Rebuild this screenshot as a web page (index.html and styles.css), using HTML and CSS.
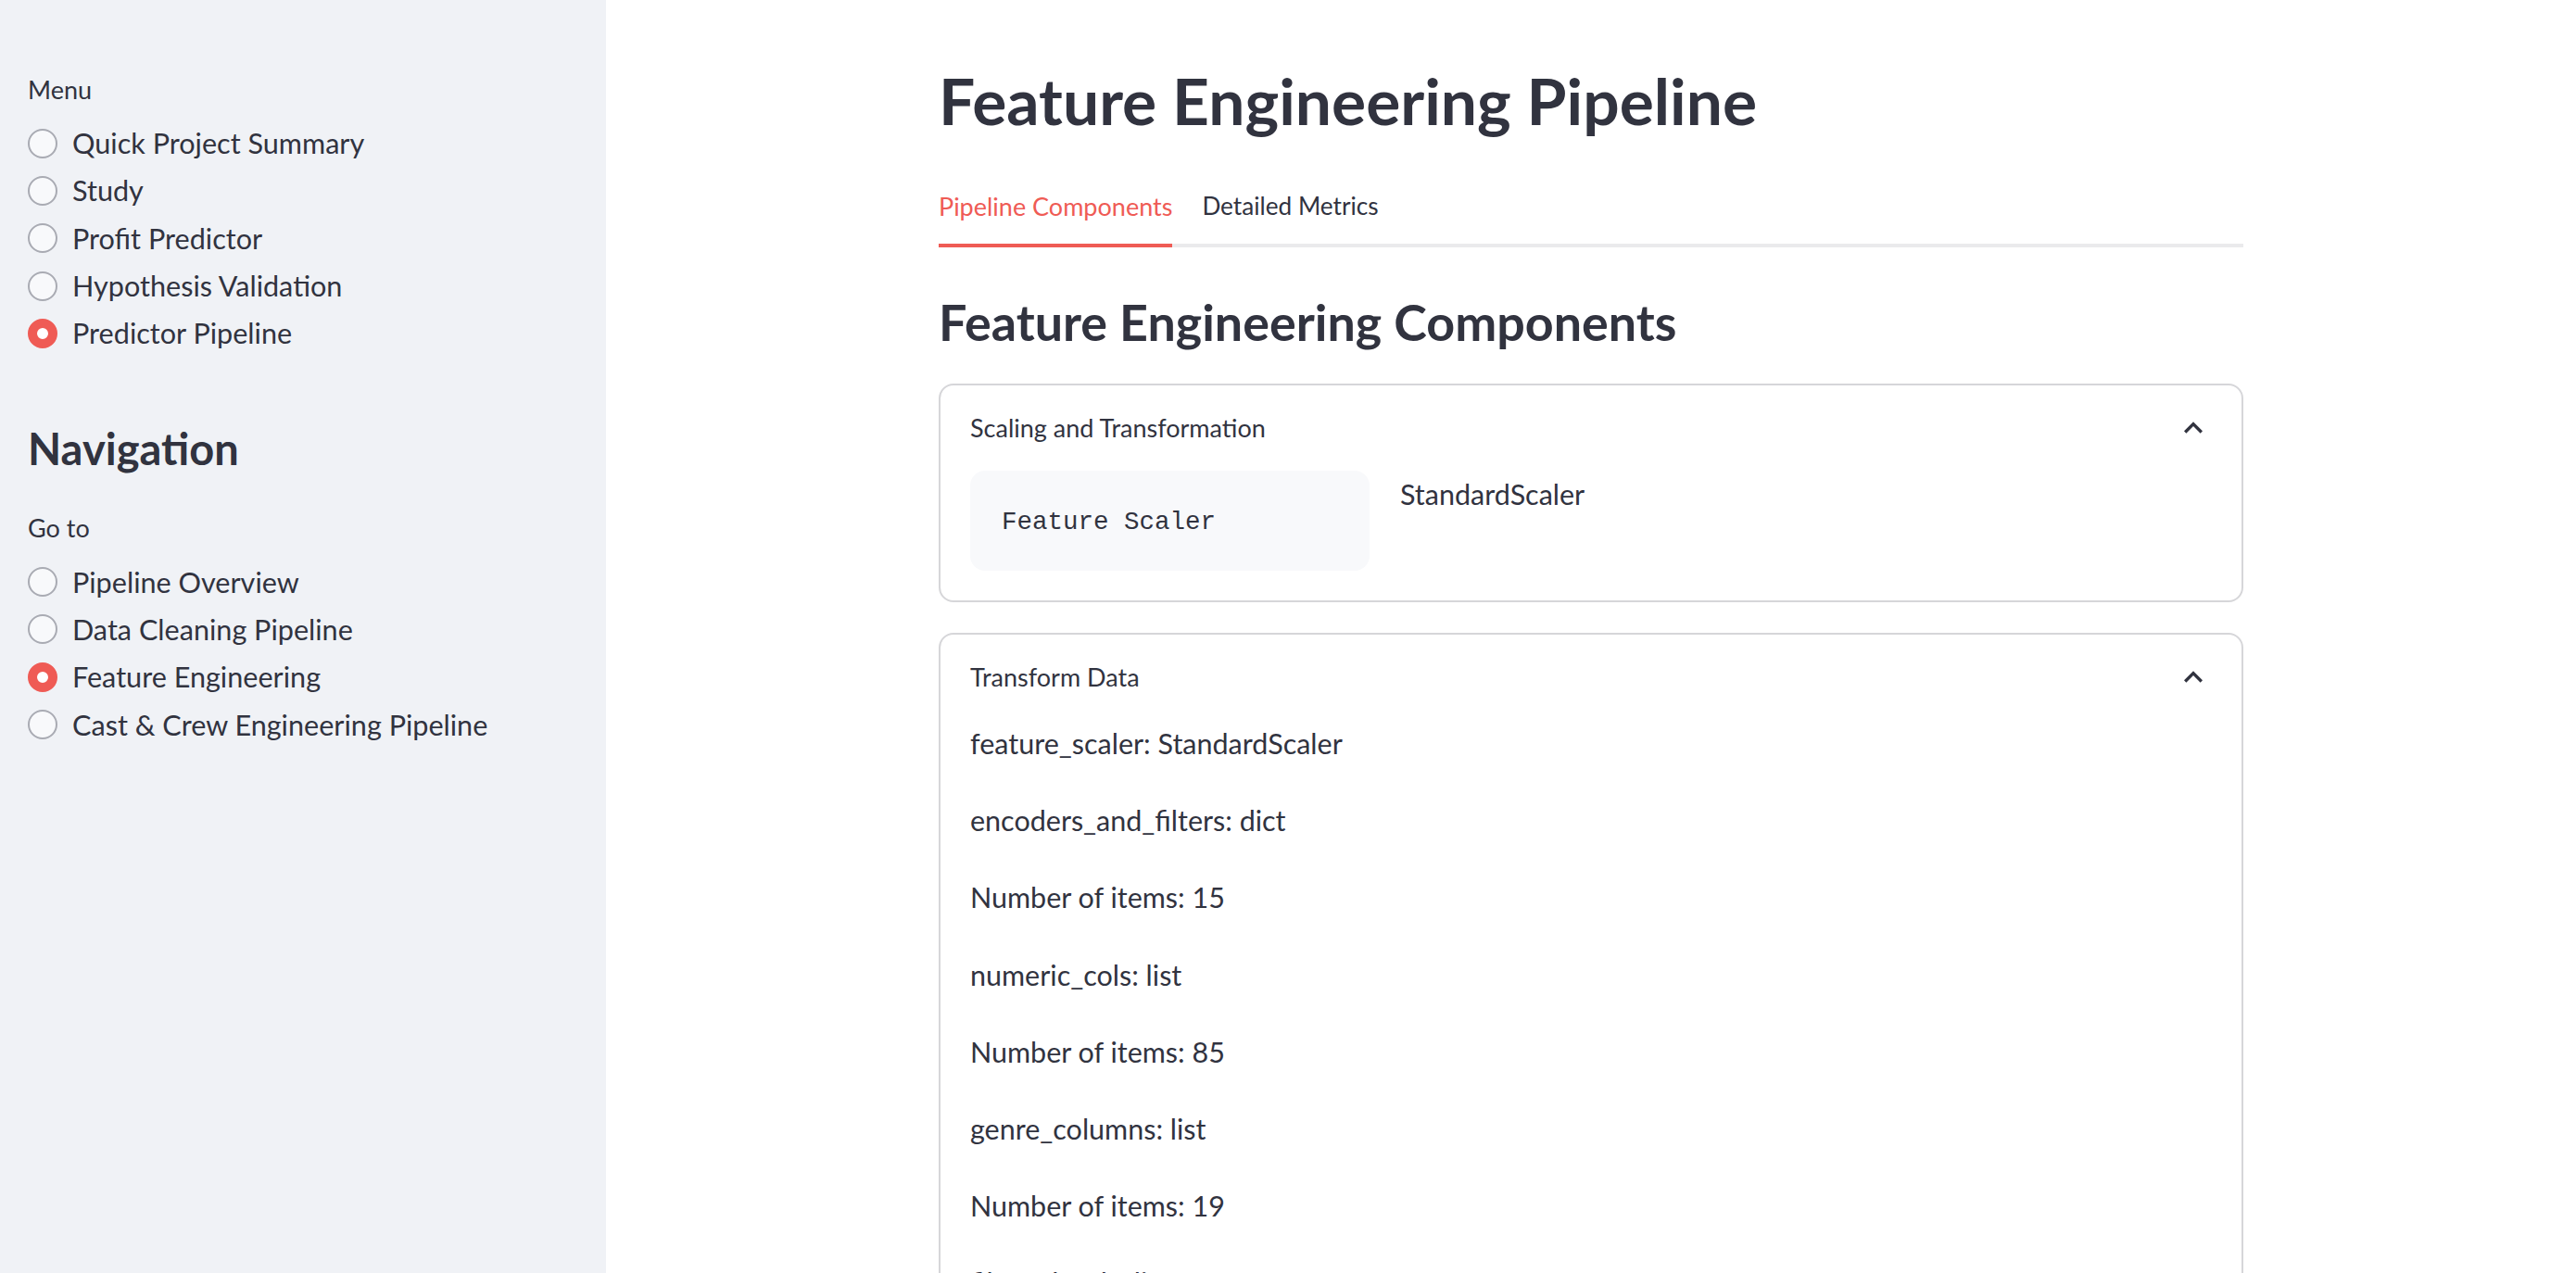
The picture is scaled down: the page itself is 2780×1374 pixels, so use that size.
FILE: index.html
```html
<!DOCTYPE html>
<html lang="en">
<head>
<meta charset="utf-8">
<title>Feature Engineering Pipeline</title>
<link rel="stylesheet" href="styles.css">
</head>
<body>
<div class="app">
  <aside class="sidebar">
    <div class="widget-label">Menu</div>
    <div class="radio-group">
      <div class="radio"><span class="dot"></span><span class="radio-text">Quick Project Summary</span></div>
      <div class="radio"><span class="dot"></span><span class="radio-text">Study</span></div>
      <div class="radio"><span class="dot"></span><span class="radio-text">Profit Predictor</span></div>
      <div class="radio"><span class="dot"></span><span class="radio-text">Hypothesis Validation</span></div>
      <div class="radio checked"><span class="dot"></span><span class="radio-text">Predictor Pipeline</span></div>
    </div>
    <h2 class="side-heading">Navigation</h2>
    <div class="widget-label">Go to</div>
    <div class="radio-group">
      <div class="radio"><span class="dot"></span><span class="radio-text">Pipeline Overview</span></div>
      <div class="radio"><span class="dot"></span><span class="radio-text">Data Cleaning Pipeline</span></div>
      <div class="radio checked"><span class="dot"></span><span class="radio-text">Feature Engineering</span></div>
      <div class="radio"><span class="dot"></span><span class="radio-text">Cast &amp; Crew Engineering Pipeline</span></div>
    </div>
  </aside>
  <main class="main">
    <div class="block">
      <h1 class="page-title">Feature Engineering Pipeline</h1>
      <div class="tabs">
        <div class="tab active">Pipeline Components</div>
        <div class="tab">Detailed Metrics</div>
      </div>
      <h3 class="section-title">Feature Engineering Components</h3>

      <div class="expander">
        <div class="exp-header">
          <span class="exp-title">Scaling and Transformation</span>
          <svg class="chevron" viewBox="0 0 24 24" width="40" height="40"><path d="M12 8l-6 6 1.41 1.41L12 10.83l4.59 4.58L18 14z" fill="#31333f"/></svg>
        </div>
        <div class="exp-body">
          <div class="cols">
            <div class="col"><pre class="code">Feature Scaler</pre></div>
            <div class="col"><p class="text">StandardScaler</p></div>
          </div>
        </div>
      </div>

      <div class="expander">
        <div class="exp-header">
          <span class="exp-title">Transform Data</span>
          <svg class="chevron" viewBox="0 0 24 24" width="40" height="40"><path d="M12 8l-6 6 1.41 1.41L12 10.83l4.59 4.58L18 14z" fill="#31333f"/></svg>
        </div>
        <div class="exp-body">
          <p class="text para">feature_scaler: StandardScaler</p>
          <p class="text para">encoders_and_filters: dict</p>
          <p class="text para">Number of items: 15</p>
          <p class="text para">numeric_cols: list</p>
          <p class="text para">Number of items: 85</p>
          <p class="text para">genre_columns: list</p>
          <p class="text para">Number of items: 19</p>
          <p class="text para">filtered_cols: list</p>
        </div>
      </div>
    </div>
  </main>
</div>
</body>
</html>
```
FILE: styles.css
```css
html, body {
  margin: 0;
  padding: 0;
  height: 100%;
  overflow: hidden;
}
body {
  font-family: "Lato", "Noto Sans", sans-serif;
  color: #31333f;
  background: #ffffff;
}
.app {
  display: flex;
  height: 1374px;
}
.sidebar {
  width: 654px;
  flex: 0 0 654px;
  background: #f0f2f6;
  box-sizing: border-box;
  padding: 74px 30px 0 30px;
}
.widget-label {
  font-size: 27px;
  line-height: 45px;
  height: 45px;
}
.radio-group {
  display: flex;
  flex-direction: column;
  margin-top: 10px;
}
.radio {
  display: flex;
  align-items: center;
  height: 51.3px;
}
.dot {
  width: 32px;
  height: 32px;
  box-sizing: border-box;
  border-radius: 50%;
  border: 2px solid #a9abb3;
  background: #f8f9fb;
  flex: 0 0 32px;
}
.radio.checked .dot {
  border: 10px solid #ef5b55;
  background: #ffffff;
}
.radio-text {
  margin-left: 16px;
  font-size: 30.6px;
  line-height: 51px;
  white-space: nowrap;
}
.side-heading {
  margin: 69px 0 0 0;
  font-size: 47px;
  line-height: 60px;
  font-weight: 700;
  letter-spacing: 0;
}
.sidebar .side-heading + .widget-label {
  margin-top: 33px;
}

.main {
  flex: 1;
  display: flex;
  justify-content: center;
}
.block {
  width: 1408px;
  padding-top: 65px;
}
.page-title {
  margin: 0;
  font-size: 69.5px;
  line-height: 86px;
  font-weight: 700;
  letter-spacing: 0;
}
.tabs {
  display: flex;
  gap: 32px;
  margin-top: 49px;
  box-shadow: inset 0 -4px 0 #eaeaec;
}
.tab {
  font-size: 27px;
  line-height: 45px;
  padding-bottom: 18px;
  border-bottom: 4px solid transparent;
  white-space: nowrap;
}
.tab + .tab {
  font-size: 26.2px;
}
.tab.active {
  color: #ef5b55;
  border-bottom-color: #ef5b55;
}
.section-title {
  margin: 47px 0 0 0;
  font-size: 53.8px;
  line-height: 66px;
  font-weight: 700;
  letter-spacing: 0;
}
.expander {
  margin-top: 34px;
  border: 2px solid #d6d6d9;
  border-radius: 16px;
}
.expander + .expander {
  margin-top: 33px;
}
.exp-header {
  display: flex;
  align-items: center;
  justify-content: space-between;
  padding: 23px 32px 21px 32px;
  height: 45px;
}
.exp-title {
  font-size: 27px;
  line-height: 45px;
}
.chevron {
  display: block;
}
.exp-body {
  padding: 3px 32px 32px 32px;
}
.cols {
  display: grid;
  grid-template-columns: 431px 1fr;
  gap: 33px;
}
.code {
  margin: 0;
  background: #f8f9fb;
  border-radius: 16px;
  padding: 34px 34px 30px 34px;
  font-family: "Liberation Mono", "DejaVu Sans Mono", monospace;
  font-size: 27.5px;
  line-height: 44px;
  color: #31333f;
}
.text {
  margin: 0;
  font-size: 30.5px;
  line-height: 51.2px;
}
.para {
  margin-bottom: 32px;
}
```
